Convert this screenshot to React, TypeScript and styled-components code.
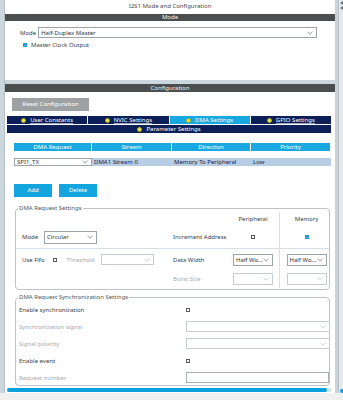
import React from 'react';
import styled, { createGlobalStyle } from 'styled-components';

const GlobalStyle = createGlobalStyle`
  html, body {
    margin: 0;
    padding: 0;
    background: #f0f0f0;
  }
  body {
    font-family: "Noto Sans", "DejaVu Sans", sans-serif;
    font-size: 6px;
    color: #3a3a3a;
  }
`;

const Screen = styled.div`
  width: 343px;
  height: 400px;
  display: flex;
  flex-direction: column;
  overflow: hidden;
  background: #f0f0f0;
`;

const Workspace = styled.div`
  display: flex;
  height: 393px;
`;

const LeftStrip = styled.div`
  width: 4px;
  background: #ccd6dd;
  border-right: 1px solid #b3c0c9;
`;

const RightStrip = styled.div`
  width: 8px;
  display: flex;
  background: #e6e9eb;
`;

const RightEdge = styled.div`
  width: 3px;
  background: #c9d3da;
  border-right: 1px solid #b9c3ca;
`;

const RightScroll = styled.div`
  flex: 1;
  display: flex;
  flex-direction: column;
  justify-content: space-between;
  align-items: flex-end;
  padding-top: 1px;
`;

const ScrollDot = styled.div`
  width: 3px;
  height: 4px;
  border-radius: 2px 0 0 2px;
  background: #0ba3dc;
`;

const Main = styled.div`
  width: 330px;
  display: flex;
  flex-direction: column;
  background: #ccd6dd;
`;

const TopPanel = styled.div`
  height: 80px;
  background: #fff;
  display: flex;
  flex-direction: column;
`;

const Title = styled.div`
  height: 14px;
  line-height: 13px;
  text-align: center;
  color: #4a4a4a;
`;

const SectionBar = styled.div<{ $h: number }>`
  height: ${p => p.$h}px;
  line-height: ${p => p.$h}px;
  background: #4a4e4e;
  color: #f2f2f2;
  text-align: center;
  font-size: 6px;
`;

const ModeRow = styled.div`
  display: flex;
  align-items: center;
  gap: 2px;
  margin-top: 6px;
  padding-left: 15px;
`;

const CheckRow = styled.div`
  display: flex;
  align-items: center;
  gap: 4px;
  height: 10px;
  margin-top: 2px;
  padding-left: 18px;
`;

const Text = styled.span<{ $muted?: boolean }>`
  color: ${p => (p.$muted ? '#a9a9a9' : '#3c3c3c')};
  white-space: nowrap;
`;

const SelectBox = styled.div<{ $w: number; $h?: number; $disabled?: boolean }>`
  width: ${p => p.$w}px;
  height: ${p => p.$h ?? 11}px;
  box-sizing: border-box;
  border: 1px solid ${p => (p.$disabled ? '#c6ccd0' : '#9ba4aa')};
  background: #fff;
  display: flex;
  align-items: center;
  justify-content: space-between;
  padding: 0 3px 0 2px;
  color: #333;
  white-space: nowrap;
  overflow: hidden;
  flex-shrink: 0;
`;

const Chevron = ({ light }: { light?: boolean }) => (
  <svg width="6" height="4" viewBox="0 0 6 4">
    <polyline points="0.5,0.6 3,3.2 5.5,0.6" fill="none" stroke={light ? '#c0c5c8' : '#7d858a'} strokeWidth="0.8" />
  </svg>
);

const Select = ({ w, h, value, disabled }: { w: number; h?: number; value?: string; disabled?: boolean }) => (
  <SelectBox $w={w} $h={h} $disabled={disabled}>
    <span>{value}</span>
    <Chevron light={disabled} />
  </SelectBox>
);

const Box = styled.span<{ $checked?: boolean }>`
  display: inline-flex;
  align-items: center;
  justify-content: center;
  width: 4px;
  height: 4px;
  box-sizing: border-box;
  border: 1px solid ${p => (p.$checked ? '#1f98d5' : '#5a5a5a')};
  background: ${p => (p.$checked ? '#1f98d5' : '#fff')};
  flex-shrink: 0;
`;

const Check = ({ checked }: { checked?: boolean }) => (
  <Box $checked={checked}>
    {checked && (
      <svg width="3" height="3" viewBox="0 0 3 3">
        <polyline points="0.3,1.6 1.2,2.4 2.7,0.5" fill="none" stroke="#fff" strokeWidth="0.6" />
      </svg>
    )}
  </Box>
);

const ConfigPanel = styled.div`
  flex: 1;
  margin-top: 4px;
  background: #fff;
  display: flex;
  flex-direction: column;
`;

const GreyButton = styled.div`
  width: 77px;
  height: 13px;
  line-height: 13px;
  margin: 6px 0 0 7px;
  background: #9da1a3;
  color: #fff;
  text-align: center;
`;

const Tabs = styled.div`
  margin: 5px 0 0 2px;
  width: 324px;
  display: flex;
  flex-direction: column;
  gap: 1px;
`;

const TabRow = styled.div`
  display: grid;
  grid-template-columns: repeat(4, 1fr);
  gap: 1px;
`;

const Tab = styled.div<{ $active?: boolean; $underline?: boolean }>`
  height: 8px;
  display: flex;
  align-items: center;
  justify-content: center;
  gap: 4px;
  background: ${p => (p.$active ? '#17a8e0' : '#0d1f58')};
  color: #fff;
  text-decoration: ${p => (p.$underline ? 'underline' : 'none')};
  text-decoration-color: rgba(255, 255, 255, 0.6);
  text-underline-offset: 1px;
`;

const Dot = styled.span`
  width: 5px;
  height: 5px;
  box-sizing: border-box;
  border-radius: 50%;
  background: #ebe83c;
  border: 1px solid #a9b02a;
`;

const Table = styled.div`
  margin: 10px 0 0 9px;
  width: 317px;
  display: flex;
  flex-direction: column;
  gap: 7px;
`;

const TableRow = styled.div`
  display: grid;
  grid-template-columns: 78px 80px 79px 80px;
  height: 8px;
`;

const HeadCell = styled.div`
  background: #1ba8e0;
  color: #fff;
  text-align: center;
  line-height: 8px;
  margin-right: 1px;
`;

const DataCell = styled.div`
  background: #b7cde5;
  color: #1d2446;
  line-height: 8px;
  padding-left: 2px;
`;

const ButtonRow = styled.div`
  display: flex;
  gap: 7px;
  margin: 18px 0 0 9px;
`;

const BlueButton = styled.div`
  width: 38px;
  height: 13px;
  line-height: 13px;
  background: #13a6de;
  color: #fff;
  text-align: center;
`;

const Group = styled.fieldset<{ $top: number; $h: number }>`
  margin: ${p => p.$top}px 0 0 10px;
  padding: 0;
  width: 315px;
  height: ${p => p.$h}px;
  box-sizing: border-box;
  min-width: 0;
  border: 1px solid #bdc3c7;
  border-radius: 4px;
`;

const Legend = styled.legend`
  margin-left: 2px;
  padding: 0 1px;
  line-height: 8px;
  color: #555;
`;

const DmaGrid = styled.div`
  display: grid;
  grid-template-columns: 157px 60px 46px 50px;
  grid-template-rows: 14px 23px 21px 18px;
`;

const Cell = styled.div<{ $divider?: boolean; $rule?: boolean; $pad?: number; $gap?: number }>`
  display: flex;
  align-items: center;
  gap: ${p => p.$gap ?? 4}px;
  justify-content: flex-start;
  padding-left: ${p => p.$pad ?? 0}px;
  border-left: ${p => (p.$divider ? '1px solid #d5e0ea' : 'none')};
  border-bottom: ${p => (p.$rule ? '1px solid #d5e0ea' : 'none')};
  box-sizing: border-box;
`;

const PeriphCell = styled(Cell)`
  justify-content: center;
  padding-right: 6px;
`;

const MemCell = styled(Cell)`
  justify-content: center;
  padding-left: 4px;
`;

const LeftLabel = styled(Text)`
  min-width: 18px;
`;

const ThresholdLabel = styled(Text)`
  margin: 0 -2px 0 2px;
`;

const SyncGrid = styled.div`
  display: grid;
  grid-template-columns: 166px 147px;
  grid-auto-rows: 17px;
`;

const SyncLabel = styled(Text)`
  display: flex;
  align-items: center;
  padding-left: 3px;
`;

const SyncControl = styled.div`
  display: flex;
  align-items: center;
  padding-left: 4px;
`;

const NumberInput = styled.div`
  width: 144px;
  height: 11px;
  box-sizing: border-box;
  border: 1px solid #a7afb4;
  background: #fff;
`;

const ScrollTrack = styled.div`
  margin: 2px 0 0 2px;
  width: 325px;
  height: 4px;
  border-radius: 2px;
  background: #cfe6f2;
  display: flex;
`;

const ScrollThumb = styled.div`
  width: 320px;
  height: 4px;
  border-radius: 2px;
  background: #0aa2dc;
`;

const ArrowUp = () => (
  <svg width="4" height="9" viewBox="0 0 4 9">
    <polygon points="4,0 4,4 1,2" fill="#6d7378" />
    <polygon points="4,5 4,9 1,7" fill="#6d7378" />
  </svg>
);

export default function App() {
  return (
    <Screen>
      <GlobalStyle />
      <Workspace>
        <LeftStrip />
        <Main>
          <TopPanel>
            <Title>I2S1 Mode and Configuration</Title>
            <SectionBar $h={7}>Mode</SectionBar>
            <ModeRow>
              <Text>Mode</Text>
              <Select w={279} value="Half-Duplex Master" />
            </ModeRow>
            <CheckRow>
              <Check checked />
              <Text>Master Clock Output</Text>
            </CheckRow>
          </TopPanel>

          <ConfigPanel>
            <SectionBar $h={8}>Configuration</SectionBar>
            <GreyButton>Reset Configuration</GreyButton>
            <Tabs>
              <TabRow>
                <Tab $underline><Dot />User Constants</Tab>
                <Tab $underline><Dot />NVIC Settings</Tab>
                <Tab $active><Dot />DMA Settings</Tab>
                <Tab $underline><Dot />GPIO Settings</Tab>
              </TabRow>
              <Tab><Dot />Parameter Settings</Tab>
            </Tabs>

            <Table>
              <TableRow>
                <HeadCell>DMA Request</HeadCell>
                <HeadCell>Stream</HeadCell>
                <HeadCell>Direction</HeadCell>
                <HeadCell>Priority</HeadCell>
              </TableRow>
              <TableRow>
                <Select w={78} h={8} value="SPI1_TX" />
                <DataCell>DMA1 Stream 0</DataCell>
                <DataCell>Memory To Peripheral</DataCell>
                <DataCell>Low</DataCell>
              </TableRow>
            </Table>

            <ButtonRow>
              <BlueButton>Add</BlueButton>
              <BlueButton>Delete</BlueButton>
            </ButtonRow>

            <Group $top={7} $h={86}>
              <Legend>DMA Request Settings</Legend>
              <DmaGrid>
                <Cell />
                <Cell />
                <PeriphCell><Text>Peripheral</Text></PeriphCell>
                <MemCell $divider><Text>Memory</Text></MemCell>

                <Cell $rule $pad={6}>
                  <LeftLabel>Mode</LeftLabel>
                  <Select w={53} h={13} value="Circular" />
                </Cell>
                <Cell $rule><Text>Increment Address</Text></Cell>
                <PeriphCell $rule><Check /></PeriphCell>
                <MemCell $rule $divider><Check checked /></MemCell>

                <Cell $pad={6} $gap={8}>
                  <Text>Use Fifo</Text>
                  <Check />
                  <ThresholdLabel $muted>Threshold</ThresholdLabel>
                  <Select w={53} disabled />
                </Cell>
                <Cell><Text>Data Width</Text></Cell>
                <PeriphCell><Select w={40} h={12} value="Half Wo..." /></PeriphCell>
                <MemCell $divider><Select w={40} h={12} value="Half Wo..." /></MemCell>

                <Cell />
                <Cell><Text $muted>Burst Size</Text></Cell>
                <PeriphCell><Select w={40} h={12} disabled /></PeriphCell>
                <MemCell $divider><Select w={40} h={12} disabled /></MemCell>
              </DmaGrid>
            </Group>

            <Group $top={3} $h={93}>
              <Legend>DMA Request Synchronization Settings</Legend>
              <SyncGrid>
                <SyncLabel>Enable synchronization</SyncLabel>
                <SyncControl><Check /></SyncControl>
                <SyncLabel $muted>Synchronization signal</SyncLabel>
                <SyncControl><Select w={144} disabled /></SyncControl>
                <SyncLabel $muted>Signal polarity</SyncLabel>
                <SyncControl><Select w={144} disabled /></SyncControl>
                <SyncLabel>Enable event</SyncLabel>
                <SyncControl><Check /></SyncControl>
                <SyncLabel $muted>Request number</SyncLabel>
                <SyncControl><NumberInput /></SyncControl>
              </SyncGrid>
            </Group>

            <ScrollTrack>
              <ScrollThumb />
            </ScrollTrack>
          </ConfigPanel>
        </Main>
        <RightStrip>
          <RightEdge />
          <RightScroll>
            <ArrowUp />
            <ScrollDot />
          </RightScroll>
        </RightStrip>
      </Workspace>
    </Screen>
  );
}
